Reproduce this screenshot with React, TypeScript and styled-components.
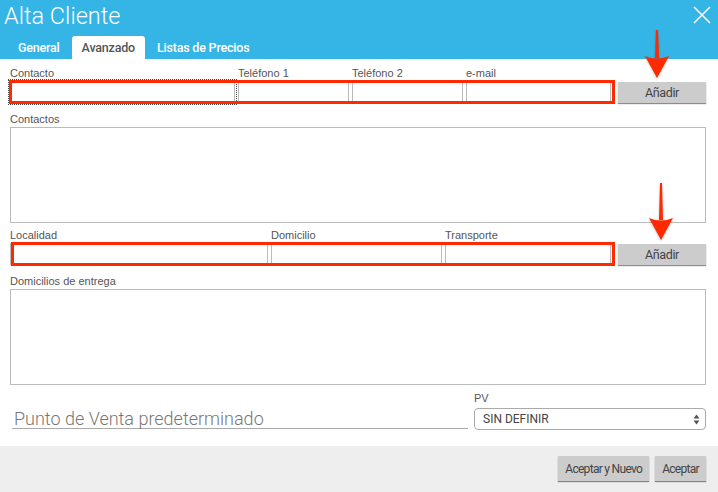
import React from 'react';
import styled, {createGlobalStyle} from 'styled-components';

const GlobalStyle = createGlobalStyle`
    html, body {
        margin: 0;
        padding: 0;
        background: #fff;
    }
    * {
        box-sizing: border-box;
    }
`

type Field = {label: string; width: number; focused?: boolean};

const contactFields: Field[] = [
    {label: 'Contacto', width: 228, focused: true},
    {label: 'Teléfono 1', width: 114},
    {label: 'Teléfono 2', width: 114},
    {label: 'e-mail', width: 148},
];

const addressFields: Field[] = [
    {label: 'Localidad', width: 261},
    {label: 'Domicilio', width: 174},
    {label: 'Transporte', width: 169},
];

const DownArrow = ({height}: {height: number}) => (
    <StyledArrow width="26" height={height} viewBox={`0 0 26 ${height}`}>
        <polygon points={`12,0 14,0 15,${height - 20} 11,${height - 20}`} fill="#ff2a00" />
        <path d={`M1 ${height - 22} Q13 ${height - 17} 25 ${height - 22} L13 ${height} Z`} fill="#ff2a00" />
    </StyledArrow>
);

const FieldRow = ({fields, shift}: {fields: Field[]; shift: number}) => (
    <StyledFieldRow>
        {fields.map((f) => (
            <StyledField key={f.label} style={{width: f.width}}>
                <StyledLabel>{f.label}</StyledLabel>
                <StyledInput $focused={f.focused} />
            </StyledField>
        ))}
        <StyledAddButton>Añadir</StyledAddButton>
        <StyledHighlight $left={shift} />
    </StyledFieldRow>
);

const App = () => {
    return (
        <>
            <GlobalStyle />
            <StyledDialog>
                <StyledHeader>
                    <StyledTitleBar>
                        <StyledTitle>Alta Cliente</StyledTitle>
                        <StyledClose width="18" height="18" viewBox="0 0 18 18">
                            <line x1="1" y1="1" x2="17" y2="17" stroke="#fff" strokeWidth="1.6" />
                            <line x1="17" y1="1" x2="1" y2="17" stroke="#fff" strokeWidth="1.6" />
                        </StyledClose>
                    </StyledTitleBar>
                    <StyledTabs>
                        <StyledTab>General</StyledTab>
                        <StyledTab $active>Avanzado</StyledTab>
                        <StyledTab>Listas de Precios</StyledTab>
                    </StyledTabs>
                </StyledHeader>

                <StyledBody>
                    <StyledArrowSlot style={{top: -29, left: 634}}>
                        <DownArrow height={48} />
                    </StyledArrowSlot>
                    <StyledArrowSlot style={{top: 124, left: 638}}>
                        <DownArrow height={57} />
                    </StyledArrowSlot>

                    <FieldRow fields={contactFields} shift={-1} />

                    <StyledBlock>
                        <StyledLabel>Contactos</StyledLabel>
                        <StyledList />
                    </StyledBlock>

                    <FieldRow fields={addressFields} shift={1} />

                    <StyledBlock>
                        <StyledLabel>Domicilios de entrega</StyledLabel>
                        <StyledList />
                    </StyledBlock>

                    <StyledBottomRow>
                        <StyledDefaultPv>Punto de Venta predeterminado</StyledDefaultPv>
                        <StyledPvField>
                            <StyledLabel>PV</StyledLabel>
                            <StyledSelect>
                                <span>SIN DEFINIR</span>
                                <svg width="7" height="11" viewBox="0 0 7 11">
                                    <polygon points="3.5,0.5 6.5,4.5 0.5,4.5" fill="#555" />
                                    <polygon points="0.5,6.5 6.5,6.5 3.5,10.5" fill="#555" />
                                </svg>
                            </StyledSelect>
                        </StyledPvField>
                    </StyledBottomRow>
                </StyledBody>

                <StyledFooter>
                    <StyledFooterButton>Aceptar y Nuevo</StyledFooterButton>
                    <StyledFooterButton>Aceptar</StyledFooterButton>
                </StyledFooter>
            </StyledDialog>
        </>
    );
};

const StyledDialog = styled.div`
    width: 718px;
    height: 492px;
    display: flex;
    flex-direction: column;
    background: #fff;
    overflow: hidden;
    font-family: 'Liberation Sans', Arial, sans-serif;
`

const StyledHeader = styled.div`
    background-color: #35b5e5;
    height: 59px;
    display: flex;
    flex-direction: column;
`

const StyledTitleBar = styled.div`
    height: 36px;
    display: flex;
    align-items: center;
    justify-content: space-between;
    padding: 0 7px 0 4px;
`

const StyledTitle = styled.h1`
    margin: -4px 0 0 0;
    font: 300 23.5px/28px Roboto, sans-serif;
    color: #fff;
`

const StyledClose = styled.svg`
    margin-top: -6px;
`

const StyledTabs = styled.div`
    display: flex;
    align-items: flex-end;
    gap: 2px;
    padding-left: 8px;
    height: 23px;
`

const StyledTab = styled.div<{$active?: boolean}>`
    height: 23px;
    padding: 0 10px;
    display: flex;
    align-items: center;
    border-radius: 3px 3px 0 0;
    font: 500 12.5px Roboto, sans-serif;
    letter-spacing: -0.2px;
    color: ${(p) => (p.$active ? '#555' : '#fff')};
    background: ${(p) => (p.$active ? '#fff' : 'transparent')};
`

const StyledBody = styled.div`
    position: relative;
    flex: 1;
    display: flex;
    flex-direction: column;
    padding: 8px 12px 0 10px;
`

const StyledArrowSlot = styled.div`
    position: absolute;
    z-index: 5;
    margin-left: 10px;
`

const StyledArrow = styled.svg`
    display: block;
    filter: drop-shadow(0 1px 1px rgba(0, 0, 0, 0.25));
`

const StyledFieldRow = styled.div`
    position: relative;
    display: flex;
    align-items: flex-end;
`

const StyledField = styled.div`
    display: flex;
    flex-direction: column;
    flex-shrink: 0;
    padding-right: 3px;
`

const StyledLabel = styled.label`
    font-size: 11px;
    line-height: 13px;
    color: #555;
    margin-bottom: 1px;
`

const StyledInput = styled.input<{$focused?: boolean}>`
    height: 22px;
    width: 100%;
    border: 1px solid #bbb;
    background: #fff;
    padding: 0 4px;
    margin: 0;
    outline: ${(p) => (p.$focused ? '1px dotted #444' : 'none')};
    outline-offset: 1px;
`

const StyledHighlight = styled.div<{$left: number}>`
    position: absolute;
    left: ${(p) => p.$left}px;
    width: ${(p) => 605 - p.$left}px;
    bottom: -1px;
    height: 24px;
    border: 3px solid #ff2a00;
    pointer-events: none;
`

const StyledAddButton = styled.button`
    flex-shrink: 0;
    margin-left: 4px;
    width: 88px;
    height: 21px;
    border: none;
    background: #cccccc;
    box-shadow: 0 1px 1px rgba(0, 0, 0, 0.45);
    font: 400 12.5px Roboto, sans-serif;
    letter-spacing: -0.4px;
    color: #444;
`

const StyledBlock = styled.div`
    display: flex;
    flex-direction: column;
    margin-top: 10px;
    margin-bottom: 6px;
`

const StyledList = styled.div`
    height: 96px;
    border: 1px solid #bbb;
`

const StyledBottomRow = styled.div`
    display: flex;
    align-items: flex-end;
    gap: 6px;
    margin-top: 1px;
`

const StyledDefaultPv = styled.div`
    flex: 1;
    margin-left: 2px;
    border-bottom: 1px solid #aaa;
    font: 300 18px/19px Roboto, sans-serif;
    color: #777;
    padding-left: 2px;
    margin-bottom: 1px;
`

const StyledPvField = styled.div`
    width: 232px;
    display: flex;
    flex-direction: column;
`

const StyledSelect = styled.div`
    height: 22px;
    border: 1px solid #aaa;
    border-radius: 4px;
    display: flex;
    align-items: center;
    justify-content: space-between;
    padding: 0 5px 0 8px;
    margin-top: 2px;
    font: 400 12px Roboto, sans-serif;
    color: #444;
`

const StyledFooter = styled.div`
    height: 46px;
    background: #eeeeee;
    display: flex;
    justify-content: flex-end;
    align-items: flex-start;
    gap: 6px;
    padding: 10px 12px 0 0;
`

const StyledFooterButton = styled.button`
    height: 25px;
    padding: 0 7px;
    border: none;
    background: #cccccc;
    box-shadow: 0 1px 1px rgba(0, 0, 0, 0.45);
    font: 400 12px Roboto, sans-serif;
    letter-spacing: -0.7px;
    color: #444;
`

export default App;
